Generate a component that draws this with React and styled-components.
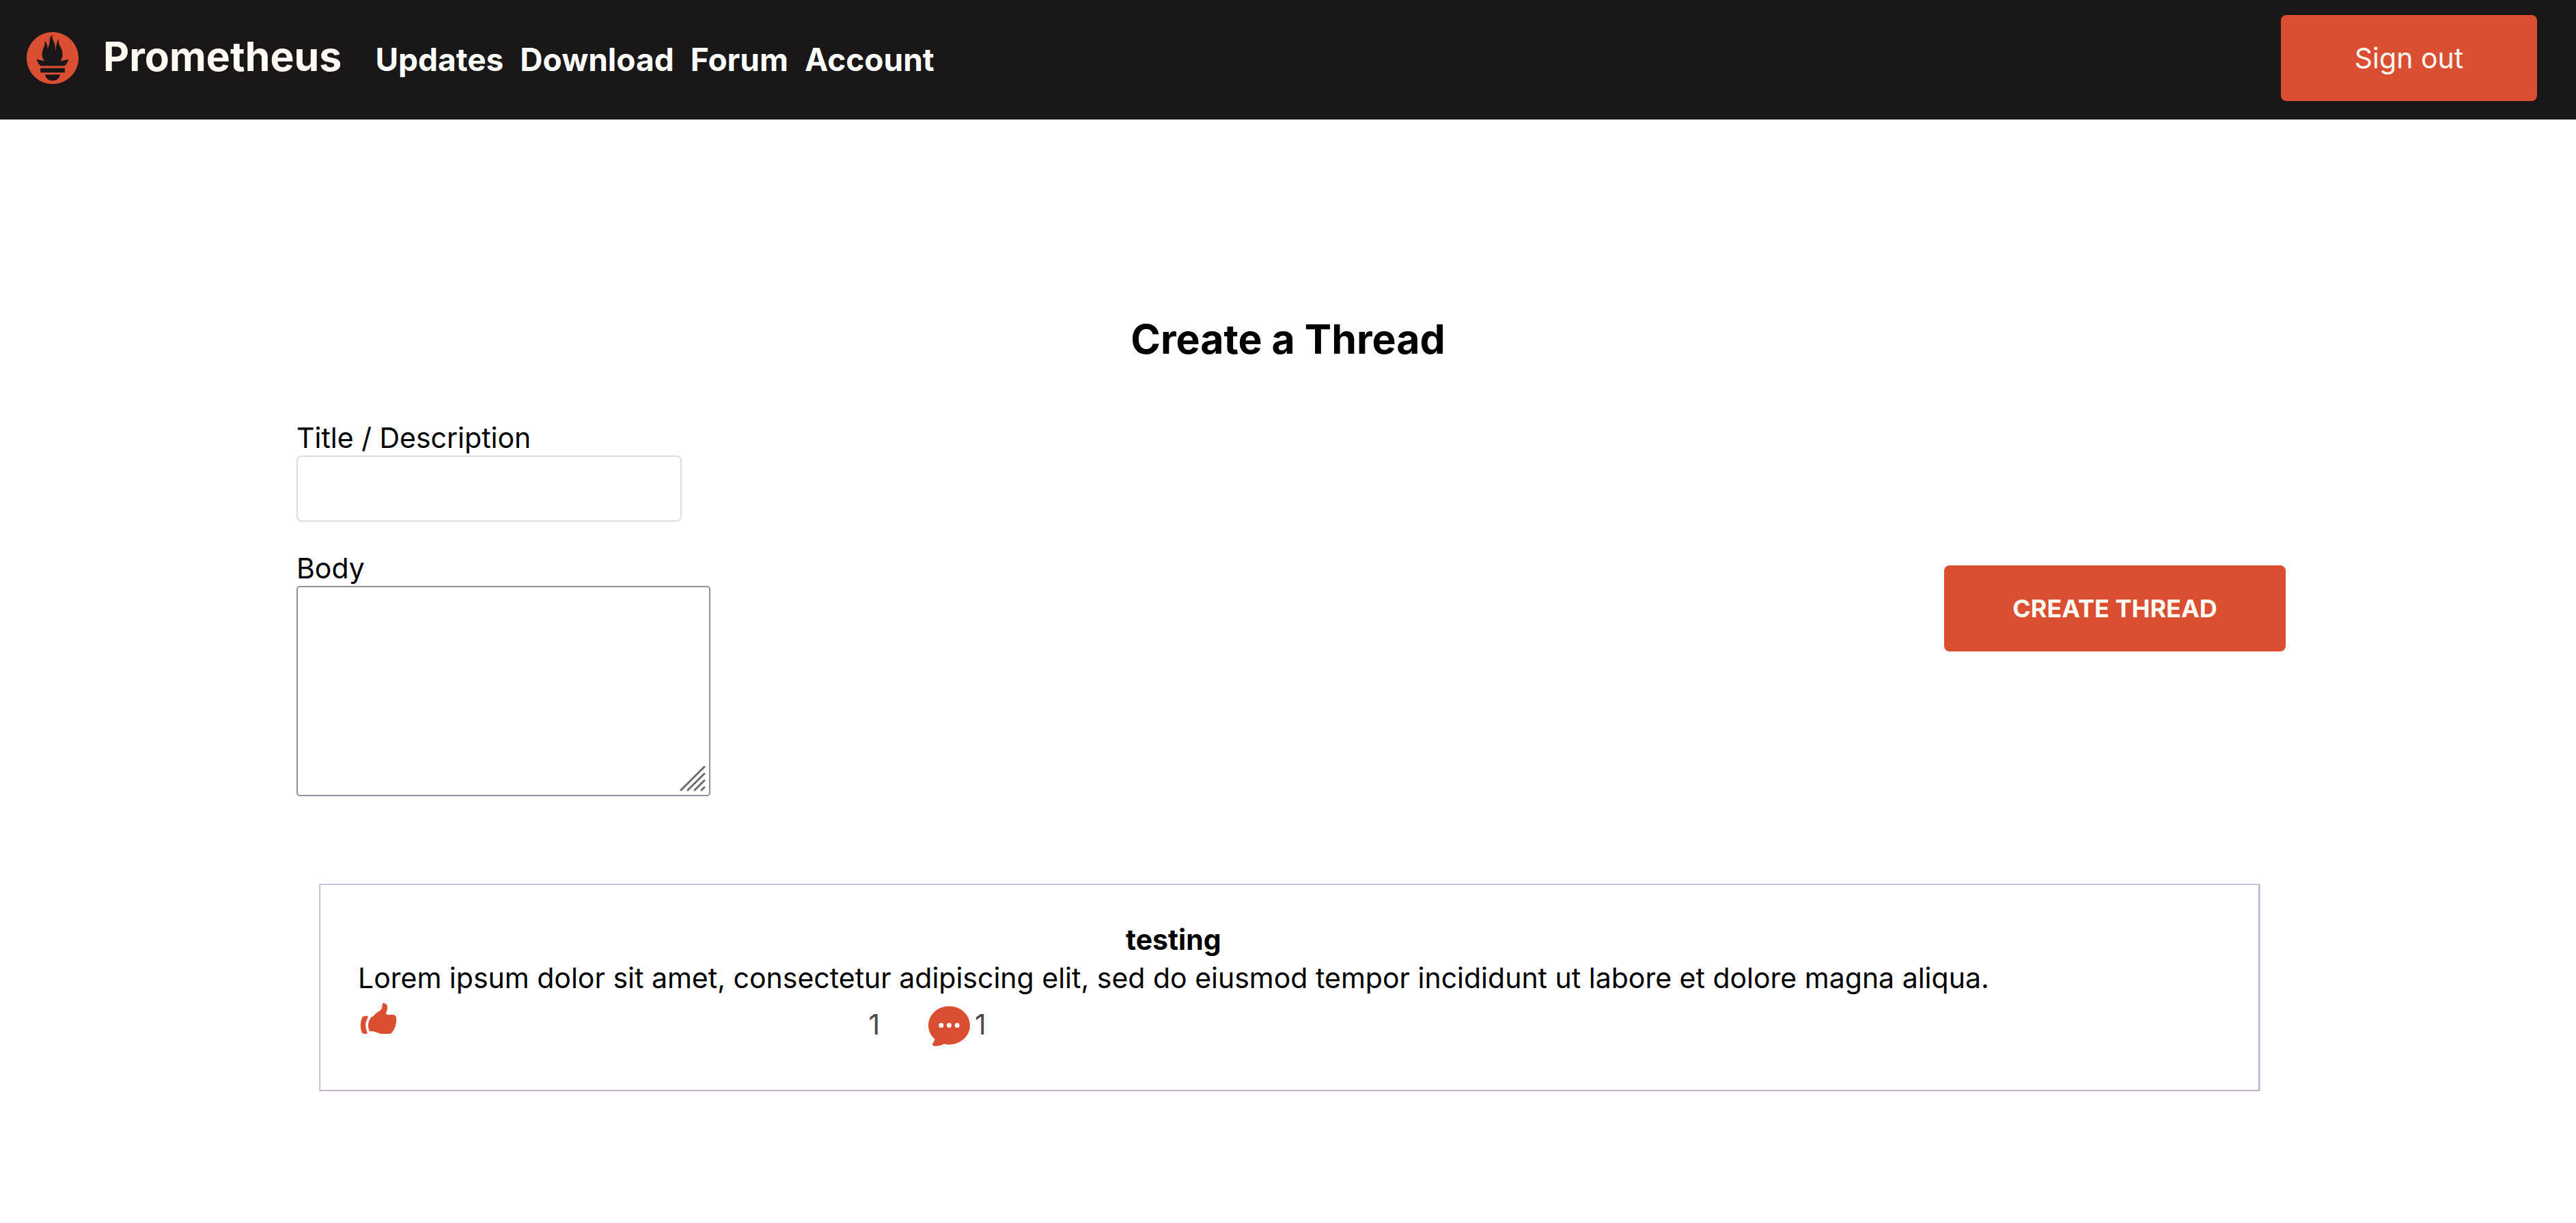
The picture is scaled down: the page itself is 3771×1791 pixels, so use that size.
import React from 'react';
import { HiHandThumbUp, HiChatBubbleOvalLeftEllipsis } from 'react-icons/hi2';
import { SiPrometheus } from 'react-icons/si';
import styled, { ThemeProvider, createGlobalStyle } from 'styled-components';

const theme = {
  accent: '#da4f32',
  dark: '#191718',
  cream: '#fffaf2',
  text: '#000000',
  muted: '#4a4a4a',
  inputBorder: '#dddddf',
  areaBorder: '#8f8f9d',
  cardBorder: '#c2b2d0',
  cardRing: '#dccfe8',
};

const GlobalStyle = createGlobalStyle`
  *, *::before, *::after { box-sizing: border-box; }
  body {
    margin: 0;
    background: #ffffff;
    color: ${theme.text};
    font-family: Inter, "Liberation Sans", sans-serif;
    font-size: 41px;
    line-height: 52px;
  }
  h1, h2, p { margin: 0; }
  button, input, textarea { font: inherit; }
`;

const Header = styled.header`
  display: flex;
  align-items: center;
  padding: 22px 57px 27px 39px;
  background: ${p => p.theme.dark};
`;

const LogoLink = styled.a`
  display: flex;
  margin-right: 36px;
  color: ${p => p.theme.accent};
`;

const HeaderLinks = styled.div`
  display: flex;
  align-items: baseline;
  gap: 49px;
`;

const BrandLink = styled.a`
  color: ${p => p.theme.cream};
  font-size: 59px;
  font-weight: 700;
  line-height: 72px;
  text-decoration: none;
`;

const Nav = styled.nav`
  display: flex;
  gap: 24px;
`;

const NavLink = styled.a`
  color: #ffffff;
  font-size: 46px;
  font-weight: 700;
  line-height: 72px;
  text-decoration: none;
`;

const Button = styled.button`
  height: 126px;
  width: ${p => (p.$wide ? '500px' : '375px')};
  margin-left: auto;
  flex-shrink: 0;
  border: 0;
  border-radius: 8px;
  background: ${p => p.theme.accent};
  color: ${p => p.theme.cream};
  font-size: ${p => (p.$wide ? '36px' : '41px')};
  font-weight: ${p => (p.$wide ? 700 : 400)};
  text-transform: ${p => (p.$wide ? 'uppercase' : 'none')};
  cursor: pointer;
`;

const PageTitle = styled.h1`
  margin-top: 286px;
  font-size: 59px;
  font-weight: 700;
  line-height: 72px;
  text-align: center;
`;

const Content = styled.div`
  padding: 82px 425px 0 434px;
`;

const Form = styled.form`
  display: flex;
  align-items: center;
`;

const Fields = styled.div`
  display: flex;
  flex-direction: column;
  gap: 42px;
`;

const Field = styled.div`
  display: flex;
  flex-direction: column;
  align-items: flex-start;
`;

const TextInput = styled.input`
  width: 564px;
  height: 97px;
  padding: 0 24px;
  border: 2px solid ${p => p.theme.inputBorder};
  border-radius: 8px;
  background: #ffffff;
`;

const AreaWrap = styled.div`
  position: relative;
  display: flex;
`;

const TextArea = styled.textarea`
  width: 606px;
  height: 308px;
  padding: 5px;
  border: 2px solid ${p => p.theme.areaBorder};
  border-radius: 5px;
  background: #ffffff;
  resize: none;
`;

const Grip = styled.svg`
  position: absolute;
  right: 7px;
  bottom: 7px;
  width: 38px;
  height: 38px;
  fill: none;
  stroke: #6c6c6c;
  stroke-width: 3;
  stroke-linecap: round;
  pointer-events: none;
`;

const Card = styled.article`
  display: flex;
  margin: 129px 38px 0 34px;
  padding: 52px 55px 55px;
  border: solid ${p => p.theme.cardBorder};
  border-width: 1px 2px 2px 1px;
  box-shadow: 0 0 0 1px ${p => p.theme.cardRing};
  background: #ffffff;
`;

const CardBody = styled.div`
  line-height: 56px;
`;

const CardTitle = styled.h2`
  font-size: 41px;
  font-weight: 700;
  text-align: center;
`;

const Actions = styled.div`
  display: flex;
  align-items: flex-start;
  gap: 64px;
  margin-top: 4px;
  color: ${p => p.theme.muted};
  line-height: 72px;
`;

const Action = styled.div`
  display: flex;
  align-items: flex-start;
  justify-content: space-between;
  width: ${p => (p.$spread ? '32%' : 'auto')};
`;

const IconButton = styled.button`
  display: flex;
  padding: 0 0 2px;
  border: 0;
  background: none;
  color: ${p => p.theme.accent};
  cursor: pointer;
`;

const navItems = ['Updates', 'Download', 'Forum', 'Account'];

export default function App() {
  return (
    <ThemeProvider theme={theme}>
      <GlobalStyle />
      <Header>
        <LogoLink href="#" aria-label="Home">
          <SiPrometheus size={76} />
        </LogoLink>
        <HeaderLinks>
          <BrandLink href="#">Prometheus</BrandLink>
          <Nav>
            {navItems.map(item => (
              <NavLink key={item} href={`#${item.toLowerCase()}`}>{item}</NavLink>
            ))}
          </Nav>
        </HeaderLinks>
        <Button type="button">Sign out</Button>
      </Header>
      <main>
        <PageTitle>Create a Thread</PageTitle>
        <Content>
          <Form onSubmit={e => e.preventDefault()}>
            <Fields>
              <Field>
                <label htmlFor="title">Title / Description</label>
                <TextInput id="title" type="text" />
              </Field>
              <Field>
                <label htmlFor="body">Body</label>
                <AreaWrap>
                  <TextArea id="body" />
                  <Grip viewBox="0 0 38 38" aria-hidden="true">
                    <path d="M2 36L36 2M12 36L36 12M22 36L36 22M32 36L36 32" />
                  </Grip>
                </AreaWrap>
              </Field>
            </Fields>
            <Button type="submit" $wide>Create Thread</Button>
          </Form>
          <Card>
            <CardBody>
              <CardTitle>testing</CardTitle>
              <p>
                Lorem ipsum dolor sit amet, consectetur adipiscing elit, sed do eiusmod tempor
                incididunt ut labore et dolore magna aliqua.
              </p>
              <Actions>
                <Action $spread>
                  <IconButton type="button" aria-label="Like">
                    <HiHandThumbUp size={60} />
                  </IconButton>
                  <span>1</span>
                </Action>
                <Action>
                  <IconButton type="button" aria-label="Comments">
                    <HiChatBubbleOvalLeftEllipsis size={75} />
                  </IconButton>
                  <span>1</span>
                </Action>
              </Actions>
            </CardBody>
          </Card>
        </Content>
      </main>
    </ThemeProvider>
  );
}
